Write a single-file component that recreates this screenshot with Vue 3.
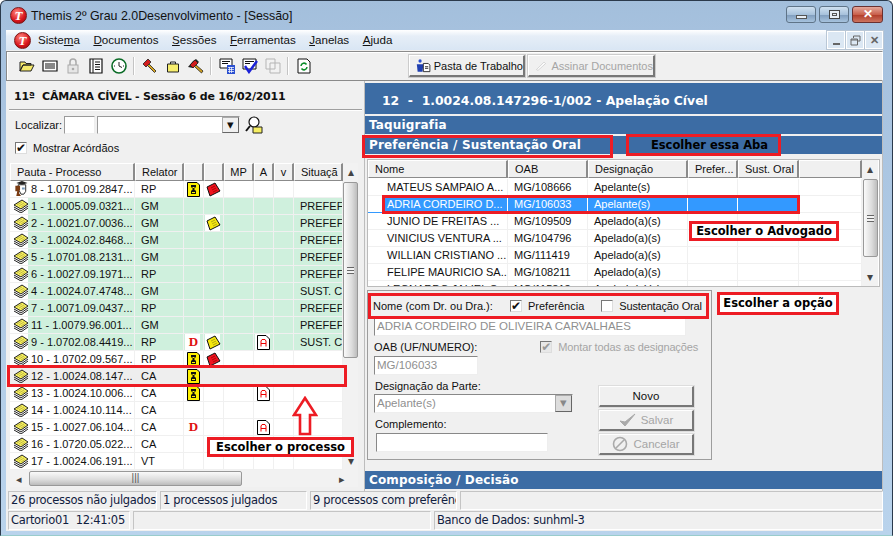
<template>
  <div class="window">
    <svg class="defs" width="0" height="0">
      <defs>
        <symbol id="stack" viewBox="0 0 16 14">
          <path d="M1 8 L8 12 L15 7 M1 10 L8 14 L15 9" fill="none" stroke="#222" stroke-width="1"/>
          <path d="M1 6 L9 1 L15 5 L8 10 Z" fill="#f6f05a" stroke="#222" stroke-width="1"/>
          <path d="M4 6 L9 3 M6 7 L11 4 M8 8 L12 5.5" stroke="#a9a040" stroke-width=".7"/>
        </symbol>
        <symbol id="person" viewBox="0 0 16 17">
          <path d="M3 2 L9 0 L15 2 L9 4 Z" fill="#222"/>
          <path d="M5 4 H13 V11 L11 14 H8 L6 10 H5 Z" fill="#fff" stroke="#222"/>
          <path d="M2 5 H7 V10 H6 V13 L8 16 H3 L4 11 H2 Z" fill="#7a3b12"/>
          <path d="M9 7 H12 V9 H9 Z" fill="#79b" />
        </symbol>
        <symbol id="badge" viewBox="0 0 13 15">
          <path d="M.5 .5 H10 L12.5 3 V14.5 H.5 Z" fill="#fdf000" stroke="#000"/>
          <path d="M4 3 H9 V5 L7 7 L9 9 V12 H4 V9 L6 7 L4 5 Z" fill="#111"/>
          <path d="M5.5 5 H7.5 V6 H5.5 Z M5 10 H8 V11 H5 Z" fill="#fdf000"/>
        </symbol>
        <symbol id="red" viewBox="0 0 15 15">
          <path d="M1 5 L9 1 L14 9 L6 13 L4 14 Z" fill="#f0121e" stroke="#111"/>
          <path d="M5 6 L9 4 M6 8 L10 6 M7 10 L11 8" stroke="#900" stroke-width=".8"/>
        </symbol>
        <symbol id="yellow" viewBox="0 0 15 15">
          <path d="M1 5 L9 1 L14 9 L6 13 L4 14 Z" fill="#f6e70e" stroke="#111"/>
          <path d="M5 6 L9 4 M6 8 L10 6 M7 10 L11 8" stroke="#a09510" stroke-width=".8"/>
        </symbol>
        <symbol id="adoc" viewBox="0 0 13 15">
          <path d="M.5 .5 H9 L12.5 4 V14.5 H.5 Z" fill="#fff" stroke="#000"/>
          <path d="M4 11.5 V6 L5 4.5 H8 L9 6 V11.5 M4 8.5 H9" fill="none" stroke="#e00" stroke-width="1"/>
        </symbol>
      </defs>
    </svg>

    <header class="titlebar">
      <span class="logo">T</span>
      <span class="title">Themis 2º Grau 2.0Desenvolvimento - [Sessão]</span>
      <div class="caption">
        <span class="capbtn"><i class="cap-min"></i></span>
        <span class="capbtn"><i class="cap-max"></i></span>
        <span class="capbtn close">✕</span>
      </div>
    </header>

    <div class="frame">
      <nav class="menubar">
        <span class="logo small">T</span>
        <span class="menu">Siste<u>m</u>a</span>
        <span class="menu"><u>D</u>ocumentos</span>
        <span class="menu"><u>S</u>essões</span>
        <span class="menu"><u>F</u>erramentas</span>
        <span class="menu"><u>J</u>anelas</span>
        <span class="menu"><u>A</u>juda</span>
        <div class="mdi">
          <span class="mdibtn"><i class="mdi-min"></i></span>
          <span class="mdibtn"><svg width="11" height="11" viewBox="0 0 11 11"><path d="M3.5 3 V1 H10 V6 H8 M1 4 H7.5 V10 H1 Z M1 5 H7.5" fill="none" stroke="#666"/></svg></span>
          <span class="mdibtn x">✕</span>
        </div>
      </nav>

      <div class="toolbar">
        <div class="tools">
          <svg class="tool" viewBox="0 0 16 16"><path d="M1 13 V4 H6 L7 5.5 H12 V7 H4 L1 13 L4 7 H15 L12 13 Z" fill="#f5e96a" stroke="#222"/></svg>
          <svg class="tool" viewBox="0 0 16 16"><path d="M1 3 H15 V13 H1 Z" fill="#fff" stroke="#111" stroke-width="1.2"/><path d="M3 6 H13 M3 8 H13 M3 10 H13" stroke="#111"/></svg>
          <svg class="tool" viewBox="0 0 16 16"><path d="M5 7 V4 A3 3 0 0 1 11 4 V7" fill="none" stroke="#aaa" stroke-width="1.5"/><rect x="3" y="7" width="10" height="8" fill="#e6e6e6" stroke="#aaa"/><circle cx="8" cy="11" r="1.3" fill="#aaa"/></svg>
          <svg class="tool" viewBox="0 0 16 16"><path d="M2 1 H14 V15 H2 Z" fill="#fff" stroke="#111" stroke-width="1.2"/><path d="M5 1 V15 M7 4 H12 M7 6.5 H12 M7 9 H12 M7 11.5 H12" stroke="#111"/></svg>
          <svg class="tool" viewBox="0 0 16 16"><circle cx="8" cy="8" r="7" fill="#fff" stroke="#0a6b26" stroke-width="1.6"/><path d="M8 4 V8 L11 9.5 M3 8 H4 M12 8 H13" stroke="#222" fill="none"/></svg>
          <i class="sep"></i>
          <svg class="tool" viewBox="0 0 16 16"><path d="M1 6 L6 1 L9 4 L4 9 Z" fill="#d21d1d" stroke="#222" stroke-width=".8"/><path d="M7 6 L14 13 L12.5 14.5 L5.5 7.5 Z" fill="#d8a520" stroke="#222" stroke-width=".8"/></svg>
          <svg class="tool" viewBox="0 0 16 16"><path d="M2.5 6 H13.5 V14 H2.5 Z" fill="#f7ee6e" stroke="#222"/><path d="M5.5 6 V4 H10.5 V6" fill="none" stroke="#222"/></svg>
          <svg class="tool" viewBox="0 0 16 16"><path d="M0 9 L5 3 L8 1 L11 4 L5 10 Z" fill="#222"/><path d="M2 7 L7 2 L10 5 L5 10 Z" fill="#d21d1d" stroke="#222" stroke-width=".8"/><path d="M8 7 L15 13 L13.5 15 L6.5 8.5 Z" fill="#d8a520" stroke="#222" stroke-width=".8"/></svg>
          <i class="sep"></i>
          <svg class="tool" viewBox="0 0 16 16"><path d="M1 1 H13 V10 H1 Z" fill="#fff" stroke="#111"/><path d="M3 3.5 H11 M3 5.5 H9" stroke="#111"/><rect x="8" y="7" width="8" height="9" fill="#2a4fd0"/><path d="M9 9.5 H15 M9 11.5 H15 M9 13.5 H15 M10.5 9 V15 M12.5 9 V15" stroke="#fff" stroke-width=".7"/></svg>
          <svg class="tool" viewBox="0 0 16 16"><path d="M1 1 H14 V11 H1 Z" fill="#fff" stroke="#111"/><path d="M3 3.5 H12 M3 5.5 H8" stroke="#111"/><path d="M3 8 L7 14 L15 3" fill="none" stroke="#1c22d8" stroke-width="2.4"/></svg>
          <svg class="tool" viewBox="0 0 16 16"><path d="M1 1 H10 V11 H1 Z M5 5 H15 V15 H5 Z" fill="#f2f2f2" stroke="#b5b5b5"/></svg>
          <i class="sep"></i>
          <svg class="tool" viewBox="0 0 16 16"><path d="M2 1 H11 L14 4 V15 H2 Z" fill="#fff" stroke="#111"/><path d="M5 8 A3 3 0 0 1 10.5 6.5 M11 9 A3 3 0 0 1 5.5 10.5" fill="none" stroke="#0c8d2c" stroke-width="1.5"/></svg>
        </div>
        <button class="tbtn t1">
          <svg width="18" height="17" viewBox="0 0 18 17"><circle cx="5" cy="3" r="2" fill="#2a4fd0"/><path d="M1 7 H9 L8 16 H2 Z" fill="#1f3fb0"/><path d="M9 6 H15 L17 8 V16 H9 Z" fill="#fff" stroke="#111"/><path d="M11 10 H15 M11 12 H15" stroke="#111"/></svg>
          Pasta de Trabalho
        </button>
        <button class="tbtn off t2">
          <svg width="18" height="15" viewBox="0 0 18 15"><path d="M2 13 L12 3 L14 5 L4 14 Z" fill="#fff" stroke="#c8c8c8"/></svg>
          Assinar Documentos
        </button>
      </div>

      <main class="content">
        <section class="left">
          <h2 class="session">11ª&nbsp; CÂMARA CÍVEL - Sessão 6 de 16/02/2011</h2>
          <div class="locate">
            <label>Localizar:</label>
            <span class="input short"></span>
            <span class="input combo"><b class="arrow">▾</b></span>
            <svg width="18" height="18" viewBox="0 0 18 18"><circle cx="9" cy="6" r="5" fill="#fff" stroke="#111" stroke-width="1.2"/><path d="M5 10 L1 15" stroke="#111" stroke-width="2"/><path d="M8 11 H17 V17 H8 Z" fill="#f6ee62" stroke="#222"/></svg>
          </div>
          <label class="check show"><span class="box"><span class="tick">✔</span></span>Mostrar Acórdãos</label>
          <div class="grid">
            <div class="gridmain">
              <div class="row head">
                <span>Pauta - Processo</span><span>Relator</span><span></span><span></span>
                <span class="c">MP</span><span class="c">A</span><span class="c">v</span><span>Situaçã</span>
              </div>
              <div v-for="r in processes" :key="r.t" class="row" :class="{ green: r.s, picked: r.sel }">
                <span class="first">
                  <svg class="rowico" :class="{ person: r.p }"><use :href="r.p ? '#person' : '#stack'"/></svg>
                  <em>{{ r.t }}</em>
                </span>
                <span>{{ r.r }}</span>
                <span class="ic"><svg v-if="r.b" class="i13"><use href="#badge"/></svg><b v-if="r.d" class="dmark">D</b></span>
                <span class="ic"><svg v-if="r.f" class="i15"><use :href="'#' + r.f"/></svg></span>
                <span></span>
                <span class="ic"><svg v-if="r.a" class="i13"><use href="#adoc"/></svg></span>
                <span></span>
                <span class="clip">{{ r.s }}</span>
              </div>
            </div>
            <div class="vscroll">
              <span class="sa">▴</span><span class="thumb"><i></i></span><span class="sa bottom">▾</span>
            </div>
            <div class="hscroll">
              <span class="ha">◂</span><span class="hthumb">|||</span><span class="ha end">▸</span>
            </div>
          </div>
        </section>

        <section class="right">
          <div class="casehead">12&nbsp; -&nbsp; 1.0024.08.147296-1/002 - Apelação Cível</div>
          <div class="band">Taquigrafia</div>
          <div class="band">Preferência / Sustentação Oral</div>
          <div class="pane">
            <div class="lawyers">
              <div class="lawmain">
                <div class="lrow head">
                  <span>Nome</span><span>OAB</span><span>Designação</span><span>Prefer...</span><span>Sust. Oral</span><span></span>
                </div>
                <div v-for="l in lawyers" :key="l.o" class="lrow" :class="{ chosen: l.sel }">
                  <span class="lname">{{ l.n }}</span><span>{{ l.o }}</span><span>{{ l.d }}</span><span></span><span></span><span></span>
                </div>
              </div>
              <div class="vscroll small">
                <span class="sa">▴</span><span class="thumb"><i></i></span><span class="sa bottom">▾</span>
              </div>
            </div>
            <div class="form">
              <div class="formtop">
                <span class="namelabel">Nome (com Dr. ou Dra.):</span>
                <label class="check"><span class="box"><span class="tick">✔</span></span>Preferência</label>
                <label class="check"><span class="box"></span>Sustentação Oral</label>
              </div>
              <div class="ro wide">ADRIA CORDEIRO DE OLIVEIRA CARVALHAES</div>
              <div class="formmid">
                <div class="lab">OAB (UF/NUMERO):</div>
                <label class="check dis"><span class="box"><span class="tick">✔</span></span>Montar todas as designações</label>
              </div>
              <div class="ro oab">MG/106033</div>
              <div class="formlow">
                <div class="fields">
                  <div class="lab">Designação da Parte:</div>
                  <div class="ro sel">Apelante(s)<b class="arrow">▾</b></div>
                  <div class="lab">Complemento:</div>
                  <div class="ro comp"></div>
                </div>
                <div class="actions">
                  <button class="act">Novo</button>
                  <button class="act off">
                    <svg width="17" height="15" viewBox="0 0 17 15"><path d="M1 8 L6 13 L16 1 L6 9 Z" fill="#aaa" stroke="#aaa"/></svg>
                    Salvar
                  </button>
                  <button class="act off">
                    <svg width="16" height="16" viewBox="0 0 16 16"><circle cx="8" cy="8" r="6.5" fill="none" stroke="#aaa" stroke-width="1.6"/><path d="M4 12 L12 4" stroke="#aaa" stroke-width="1.6"/></svg>
                    Cancelar
                  </button>
                </div>
              </div>
            </div>
          </div>
          <div class="band last">Composição / Decisão</div>
        </section>
      </main>

      <footer class="status">
        <div class="srow">
          <span class="w150">26 processos não julgados</span>
          <span class="w148">1 processos julgados</span>
          <span class="w148">9 processos com preferênci</span>
          <span class="fill"></span>
        </div>
        <div class="srow">
          <span class="w123">Cartorio01&nbsp; 12:41:05</span>
          <span class="w298"></span>
          <span class="fill">Banco de Dados: sunhml-3</span>
        </div>
      </footer>
    </div>

    <div class="mark m-proc"></div>
    <div class="mark m-tab"></div>
    <div class="mark m-law"></div>
    <div class="mark m-opt"></div>
    <div class="note n-aba">Escolher essa Aba</div>
    <div class="note white n-adv">Escolher o Advogado</div>
    <div class="note white n-opc">Escolher a opção</div>
    <div class="note white n-pro">Escolher o processo</div>
    <svg class="arrowup" width="26" height="41" viewBox="0 0 26 41"><path d="M13 2 L24 19 H18 V38 H8 V19 H2 Z" fill="none" stroke="#ed1c24" stroke-width="2.6"/></svg>
  </div>
</template>

<script setup>
const processes = [
  { t: '8 - 1.0701.09.2847...', r: 'RP', p: true, b: true, f: 'red', s: '' },
  { t: '1 - 1.0005.09.0321...', r: 'GM', s: 'PREFEF' },
  { t: '2 - 1.0021.07.0036...', r: 'GM', f: 'yellow', s: 'PREFEF' },
  { t: '3 - 1.0024.02.8468...', r: 'GM', s: 'PREFEF' },
  { t: '5 - 1.0701.08.2131...', r: 'GM', s: 'PREFEF' },
  { t: '6 - 1.0027.09.1971...', r: 'RP', s: 'PREFEF' },
  { t: '4 - 1.0024.07.4748...', r: 'GM', s: 'SUST. C' },
  { t: '7 - 1.0071.09.0437...', r: 'RP', s: 'PREFEF' },
  { t: '11 - 1.0079.96.001...', r: 'GM', s: 'PREFEF' },
  { t: '9 - 1.0702.08.4419...', r: 'RP', d: true, f: 'yellow', a: true, s: 'SUST. C' },
  { t: '10 - 1.0702.09.567...', r: 'RP', b: true, f: 'red' },
  { t: '12 - 1.0024.08.147...', r: 'CA', b: true, sel: true },
  { t: '13 - 1.0024.10.006...', r: 'CA', b: true, a: true },
  { t: '14 - 1.0024.10.114...', r: 'CA' },
  { t: '15 - 1.0027.06.104...', r: 'CA', d: true, a: true },
  { t: '16 - 1.0720.05.022...', r: 'CA' },
  { t: '17 - 1.0024.06.191...', r: 'VT' }
]
const lawyers = [
  { n: 'MATEUS SAMPAIO A...', o: 'MG/108666', d: 'Apelante(s)' },
  { n: 'ADRIA CORDEIRO D...', o: 'MG/106033', d: 'Apelante(s)', sel: true },
  { n: 'JUNIO DE FREITAS ...', o: 'MG/109509', d: 'Apelado(a)(s)' },
  { n: 'VINICIUS VENTURA ...', o: 'MG/104796', d: 'Apelado(a)(s)' },
  { n: 'WILLIAN CRISTIANO ...', o: 'MG/111419', d: 'Apelado(a)(s)' },
  { n: 'FELIPE MAURICIO SA...', o: 'MG/108211', d: 'Apelado(a)(s)' },
  { n: 'LEONARDO JALIEL S...', o: 'MG/115813', d: 'Apelado(a)(s)' }
]
</script>

<style>
html, body { margin: 0; }
</style>

<style scoped>
* { box-sizing: border-box; }
.defs { position: absolute; }
.window {
  position: relative; width: 893px; height: 536px; overflow: hidden;
  display: flex; flex-direction: column;
  background: linear-gradient(#a3bfdc 0, #a6c1de 30px, #b9d3ec 100%);
  border: 1px solid #2b3a4c; border-bottom-color: #9cc; border-radius: 6px 6px 0 0;
  font: 11px/14px "Liberation Sans", Arial, sans-serif; color: #111;
}
.titlebar { height: 29px; flex: none; display: flex; align-items: center; padding: 0 9px; position: relative; }
.logo {
  width: 17px; height: 17px; border-radius: 50%; flex: none;
  background: radial-gradient(circle at 40% 30%, #ff8a80, #d8141c 60%, #8a0c10);
  color: #fff; font: italic bold 13px/16px "Liberation Serif", serif; text-align: center; border: 1px solid #7a1515;
}
.logo.small { margin: 0 7px 0 8px; }
.title { margin-left: 4px; font-size: 12.4px; color: #111; }
.caption { margin-left: auto; display: flex; gap: 3px; margin-top: -3px; }
.capbtn {
  width: 30px; height: 17px; border: 1px solid #5f7488; border-radius: 3px;
  background: linear-gradient(#cfe0f0, #a8c2dc 50%, #7f9cbd 52%, #a7c3de);
  display: flex; align-items: center; justify-content: center;
}
.capbtn.close { width: 31px; background: linear-gradient(#e4a89c, #c9604c 50%, #b03b28 52%, #cd7460); color: #fff; font-weight: bold; font-size: 12px; border-color: #6a3030; }
.cap-min { width: 11px; height: 4px; margin-top: 6px; background: #e8eef5; border: 1px solid #555; }
.cap-max { width: 11px; height: 9px; background: #e8eef5; border: 1px solid #444; box-shadow: inset 0 0 0 2px #e8eef5, inset 0 0 0 3px #555; }

.frame { flex: 1; min-height: 0; margin: 0 9px 4px 5px; background: #f0f0f0; display: flex; flex-direction: column; }
.menubar { height: 20px; flex: none; display: flex; align-items: center; background: linear-gradient(#ffffff, #e6eef7 30%, #d9e6f4); position: relative; font-size: 11.6px; }
.menu { margin-right: 13.5px; }
.mdi { margin-left: auto; display: flex; gap: 1px; }
.mdibtn { width: 18px; height: 18px; border: 1px solid #fff; background: #dbe7f3; outline: 1px solid #b9c7d6; display: flex; align-items: center; justify-content: center; color: #666; font-weight: bold; font-size: 11px; }
.mdi-min { width: 7px; height: 2px; background: #666; margin-top: 7px; }

.toolbar {
  height: 30px; flex: none; margin-top: 1px; display: flex; align-items: center;
  border: 1px solid #8a8a8a; border-right-color: #fff; border-bottom-color: #8a8a8a; background: #f0f0f0;
  box-shadow: inset 1px 1px 0 #fff;
  padding-left: 12px;
}
.tools { display: flex; align-items: center; gap: 7px; width: 390px; }
.tool { width: 16px; height: 16px; flex: none; }
.sep { width: 2px; height: 18px; background: #c4c4c4; border-right: 1px solid #fff; margin: 0 0 0 -1px; }
.tbtn {
  height: 22px; display: flex; align-items: center; gap: 3px; padding: 0 0 0 6px; margin-right: 3px;
  background: #f0f0f0; border: 1px solid #fff; border-right: 2px solid #777; border-bottom: 2px solid #777; outline: 1px solid #ccc;
  font: 11px "Liberation Sans", Arial, sans-serif; color: #111; white-space: nowrap;
}
.t1 { width: 116px; }
.t2 { width: 127px; }
.tbtn.off { color: #a5a5a5; }

.content { flex: 1; min-height: 0; display: flex; }
.left { width: 355px; flex: none; display: flex; flex-direction: column; padding-left: 3px; }
.session { margin: 0 -1px 0 0; height: 29px; padding: 9px 0 0 5px; border-bottom: 1px solid #9f9f9f; box-shadow: 0 1px 0 #fff; font: bold 11px/14px "DejaVu Sans", Verdana, sans-serif; letter-spacing: -.22px; white-space: nowrap; }
.locate { display: flex; align-items: center; height: 24px; margin-top: 3px; padding-left: 6px; }
.locate label { width: 49px; }
.input { height: 18px; background: #fff; border: 1px solid #9a9a9a; border-right-color: #eee; border-bottom-color: #eee; display: block; }
.short { width: 31px; margin-right: 2px; }
.combo { width: 143px; margin-right: 5px; position: relative; }
.arrow { position: absolute; right: 0; top: 0; bottom: 0; width: 17px; background: #f0f0f0; border: 1px solid #aaa; border-right-color: #666; border-bottom-color: #666; text-align: center; font-size: 13px; line-height: 14px; color: #111; font-weight: normal; }
.check { display: inline-flex; align-items: center; gap: 6px; white-space: nowrap; }
.check.show { margin: 4px 0 8px 6px; }
.box { width: 12px; height: 12px; background: #fff; border: 1px solid #777; border-right-color: #ddd; border-bottom-color: #ddd; display: block; position: relative; overflow: hidden; flex: none; }
.tick { position: absolute; left: 0; top: -2px; font: bold 12px/14px "DejaVu Sans", sans-serif; color: #111; }
.dis { color: #a5a5a5; letter-spacing: -.15px; }
.dis .box { background: #e8e8e8; }
.dis .tick { color: #999; }

.grid { margin-left: 1px; width: 348px; display: grid; grid-template-columns: 333px 15px; grid-template-rows: 307px 17px; height: 326px; }
.gridmain { overflow: hidden; background: #fff; height: 307px; }
.row { display: grid; grid-template-columns: 125px 49px 20px 20px 30px 20px 20px 1fr; height: 17px; white-space: nowrap; }
.row > span { border-right: 1px solid #f0f0f0; border-bottom: 1px solid #f0f0f0; padding-left: 6px; overflow: hidden; line-height: 16px; }
.row > .ic { padding: 0; display: flex; align-items: center; justify-content: center; }
.row.head { height: 18px; background: #f0f0f0; }
.row.head > span { border: 1px solid #fff; border-right: 2px solid #8b8b8b; border-bottom: 1px solid #8b8b8b; background: #f0f0f0; padding-left: 6px; line-height: 16px; }
.row.head > .c { padding: 0; text-align: center; }
.row.green > span { background: #cff0dd; }
.row.green > .first { background: linear-gradient(90deg, #fff 18px, #cff0dd 18px); }
.row.green > .ic:has(svg, b) { background: linear-gradient(90deg, #cff0dd 1px, #fff 1px, #fff 16px, #cff0dd 16px); }
.row.picked > span { background: #eee; border-color: #eee; }
.row > .first { display: flex; align-items: center; padding-left: 3px; }
.first em { font-style: normal; margin-left: 2px; }
.rowico { width: 16px; height: 14px; flex: none; }
.rowico.person { height: 16px; }
.i13 { width: 13px; height: 15px; }
.i15 { width: 15px; height: 15px; }
.dmark { color: #e01010; font: bold 13px/14px "Liberation Serif", serif; }
.clip { overflow: hidden; }
.vscroll { background: #f2f2f2; display: flex; flex-direction: column; align-items: center; height: 307px; position: relative; }
.vscroll.small { width: 16px; height: 126px; flex: none; }
.sa { height: 18px; line-height: 18px; color: #444; font-size: 12px; flex: none; }
.sa.bottom { margin-top: auto; }
.thumb { width: 15px; height: 176px; margin-top: 1px; background: linear-gradient(90deg, #fafafa, #dcdcdc 60%, #bdbdbd); border: 1px solid #999; border-radius: 2px; display: flex; align-items: center; justify-content: center; flex: none; }
.small .thumb { height: 78px; }
.thumb i { width: 7px; height: 7px; border-top: 1px solid #666; border-bottom: 1px solid #666; background: linear-gradient(#f2f2f2 2px, #666 2px, #666 3px, #f2f2f2 3px); }
.hscroll { grid-column: 1 / 3; height: 17px; margin-top: 0; background: #f2f2f2; display: flex; align-items: center; }
.ha { width: 18px; text-align: center; color: #444; flex: none; }
.ha.end { margin-left: auto; width: 32px; }
.hthumb { width: 213px; height: 15px; margin-left: 1px; background: linear-gradient(#fafafa, #dcdcdc 60%, #bcbcbc); border: 1px solid #999; border-radius: 2px; text-align: center; line-height: 12px; font-size: 10px; color: #555; }

.right { flex: 1; min-width: 0; display: flex; flex-direction: column; margin-left: 3px; padding-top: 2px; border: 1px solid #bdbdbd; border-width: 0 1px 0 1px; }
.casehead { height: 31px; flex: none; background: #3c6ca4; color: #fff; font: bold 12.4px/35px "DejaVu Sans", Verdana, sans-serif; padding-left: 17px; white-space: nowrap; }
.band { height: 18px; flex: none; margin-top: 2px; background: #3c6ca4; color: #fff; font: bold 12px/18px "DejaVu Sans", Verdana, sans-serif; padding-left: 4px; letter-spacing: .15px; }
.band.last { margin: 1px 0 2px; }
.pane { flex: 1; min-height: 0; padding: 5px 2px 0 2px; display: flex; flex-direction: column; }
.lawyers { height: 128px; flex: none; display: flex; background: #fff; border: 1px solid #bbb; padding-right: 1px; }
.lawmain { flex: 1; overflow: hidden; min-width: 0; }
.lrow { display: grid; grid-template-columns: 140px 80px 100px 50px 61px 1fr; height: 17px; white-space: nowrap; }
.lrow > span { border-right: 1px solid #f0f0f0; border-bottom: 1px solid #f0f0f0; padding-left: 6px; line-height: 16px; overflow: hidden; }
.lrow > .lname { padding-left: 19px; }
.lrow.head { height: 18px; margin-bottom: 1px; }
.lrow.head > span { background: #f0f0f0; border: 1px solid #fff; border-right: 2px solid #8b8b8b; border-bottom: 1px solid #8b8b8b; padding-left: 6px; }
.lrow.chosen > span { background: #3399ff; color: #fff; border-right-color: #fff; border-bottom-color: #3399ff; }
.lrow.chosen > .lname { background: linear-gradient(90deg, #fff 17px, #3399ff 17px); }
.lrow.chosen > span:last-child { background: #fff; border-bottom-color: #f0f0f0; border-right-color: #f0f0f0; }

.form { width: 345px; height: 170px; margin-top: 3px; border: 1px solid #9d9d9d; padding: 6px 0 0 6px; }
.formtop { display: flex; align-items: center; height: 18px; }
.namelabel { width: 137px; margin-left: -1px; white-space: nowrap; }
.formtop .check:nth-child(3) { margin-left: 17px; letter-spacing: -.15px; }
.ro { background: #fff; border: 1px solid #888; border-right-color: #eee; border-bottom-color: #eee; color: #8f8f8f; height: 19px; padding-left: 2px; line-height: 17px; position: relative; font-size: 11.5px; }
.wide { width: 312px; margin-top: 2px; }
.formmid { display: flex; height: 17px; margin-top: 2px; align-items: center; justify-content: space-between; padding-right: 13px; }
.lab { line-height: 14px; }
.oab { width: 104px; margin-top: 1px; }
.formlow { display: flex; }
.fields { width: 225px; }
.fields .lab { margin-top: 4px; margin-left: 1px; height: 15px; }
.sel { width: 199px; height: 19px; }
.sel .arrow { color: #888; background: #ddd; }
.comp { width: 172px; margin-left: 2px; height: 19px; margin-top: 1px; }
.actions { display: flex; flex-direction: column; gap: 3px; margin-top: 11px; }
.act { width: 95px; height: 21px; background: #f0f0f0; border: 1px solid #fff; border-right: 2px solid #777; border-bottom: 2px solid #777; outline: 1px solid #ddd; font: 11.5px "Liberation Sans", Arial, sans-serif; color: #111; display: flex; align-items: center; justify-content: center; gap: 5px; padding: 0; }
.act.off { color: #a5a5a5; }

.status { flex: none; }
.srow { display: flex; height: 19px; margin-bottom: 1px; gap: 3px; padding-left: 2px; }
.srow > span { border: 1px solid #c4c4c4; border-right-color: #fff; border-bottom-color: #fff; font: 11.5px/17px "DejaVu Sans", Tahoma, sans-serif; letter-spacing: -.3px; padding-left: 2px; white-space: nowrap; overflow: hidden; color: #102040; }
.w150 { width: 149px; }
.w148 { width: 147px; }
.w123 { width: 122px; }
.w298 { width: 298px; }
.fill { flex: 1; }

.mark { position: absolute; border: 3px solid #ed1c24; }
.m-proc { left: 6px; top: 364px; width: 340px; height: 22px; }
.m-tab { left: 361px; top: 134px; width: 251px; height: 23px; }
.m-law { left: 381px; top: 194px; width: 418px; height: 19px; }
.m-opt { left: 367px; top: 292px; width: 341px; height: 26px; }
.note { position: absolute; border: 3px solid #ed1c24; font: bold 11.5px/16px "DejaVu Sans", Verdana, sans-serif; color: #000; white-space: nowrap; text-align: center; }
.note.white { background: #fff; }
.n-aba { left: 625px; top: 133px; width: 155px; height: 22px; background: #3c6ca4; padding-left: 12px; }
.n-adv { left: 688px; top: 220px; width: 150px; height: 20px; line-height: 15px; }
.n-opc { left: 716px; top: 291px; width: 122px; height: 23px; line-height: 17px; }
.n-pro { left: 206px; top: 436px; width: 147px; height: 20px; line-height: 15px; }
.arrowup { position: absolute; left: 291px; top: 395px; }
</style>
